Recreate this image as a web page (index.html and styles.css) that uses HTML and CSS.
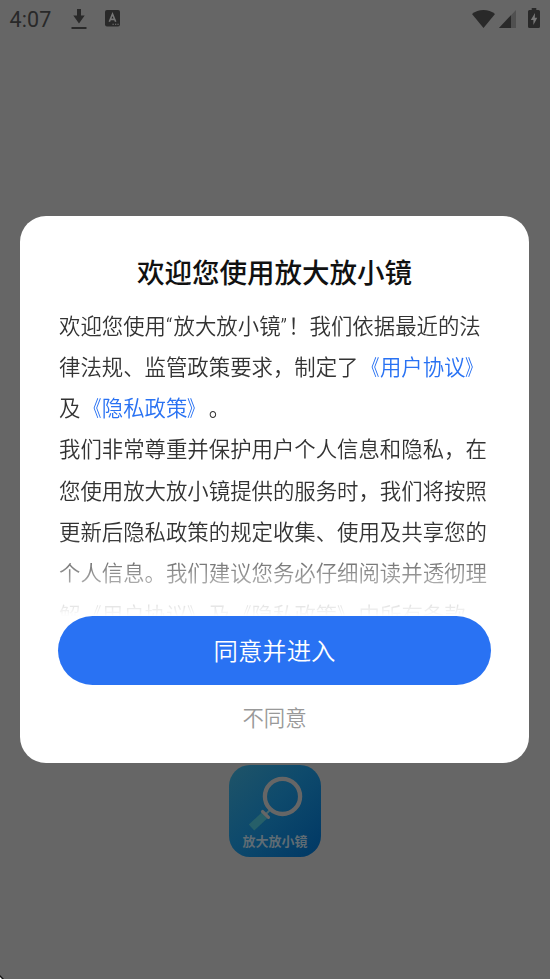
FILE: index.html
```html
<!DOCTYPE html>
<html lang="zh-CN">
<head>
<meta charset="utf-8">
<title>放大放小镜</title>
<link rel="stylesheet" href="styles.css">
</head>
<body>
<div class="screen">
  <header class="status">
    <span class="clock">4:07</span>
    <svg class="download" width="16" height="20" viewBox="0 0 16 20"><path d="M6 0h4v6.500h3.700L8 14.500 2.300 6.500H6zM.5 18h15v2H.5z"/></svg>
    <svg class="ime" width="15" height="17" viewBox="0 0 15 17"><rect width="15" height="16.500" rx="2"/><path class="ime-mark" d="M4.300 11.700 7.500 4l3.200 7.700M5.400 9.400h4.200"/><path class="ime-dots" d="M7.500 14.300h1.300M10 14.300h1.300M12.400 14.300h1.300"/></svg>
    <span class="spacer"></span>
    <svg class="wifi" width="23" height="18" viewBox="0 0 23 18"><path d="M0 4C6.300-1.300 16.700-1.300 23 4L11.500 18z"/></svg>
    <svg class="signal" width="17" height="18" viewBox="0 0 17 18"><path class="signal-empty" d="M17 0v18H0z"/><path d="M12 5.300V18H0z"/></svg>
    <svg class="battery" width="12" height="20" viewBox="0 0 12 20"><path d="M3.700 0h4.600v2H10.500Q12 2 12 3.500v15Q12 20 10.500 20h-9Q0 20 0 18.500v-15Q0 2 1.500 2h2.200z"/><path class="bolt" d="M7 5 2.800 12h2.600v5L9.300 9.800H6.800z"/></svg>
  </header>
  <div class="logo">
    <svg class="glass" width="92" height="92" viewBox="0 0 92 92">
      <path class="handle" d="M36.500 49.500 22.500 62.500"/>
      <path class="neck" d="m37 49 4.500-4.500"/>
      <path class="collar" d="m33.500 46.500 6 5.800"/>
      <circle class="lens" cx="53.500" cy="31.400" r="17.600"/>
    </svg>
    <span class="logo-name">放大放小镜</span>
  </div>
  <section class="dialog">
    <h1 class="title">欢迎您使用放大放小镜</h1>
    <div class="terms">
      <p>欢迎您使用<span class="quote">“</span>放大放小镜<span class="quote">”</span>！我们依据最近的法<br>律法规、监管政策要求，制定了<a><span class="open">《</span>用户协议<span class="close">》</span></a><br>及<a><span class="open">《</span>隐私政策<span class="close">》</span></a>。</p>
      <p>我们非常尊重并保护用户个人信息和隐私，在<br>您使用放大放小镜提供的服务时，我们将按照<br>更新后隐私政策的规定收集、使用及共享您的<br>个人信息。我们建议您务必仔细阅读并透彻理<br>解<span class="open">《</span>用户协议<span class="close">》</span>及<span class="open">《</span>隐私政策<span class="close">》</span>中所有条款。</p>
    </div>
    <button class="agree">同意并进入</button>
    <button class="decline">不同意</button>
  </section>
  <svg class="corner" width="4" height="4" viewBox="0 0 4 4"><path d="M0 0 4 4H0z"/><path class="corner-tip" d="M0 2 2 4H0z"/></svg>
</div>
</body>
</html>
```
FILE: styles.css
```css
* { box-sizing: border-box; }
body { margin: 0; }
.screen {
  position: relative;
  display: flex;
  flex-direction: column;
  align-items: center;
  justify-content: space-between;
  height: 979px;
  padding-bottom: 122px;
  overflow: hidden;
  background: #666;
  font-family: Roboto, "Noto Sans CJK SC", sans-serif;
  text-spacing-trim: space-all;
}
.status {
  display: flex;
  align-items: center;
  width: 100%;
  height: 37px;
  padding: 0 10px 0 9px;
  fill: #292929;
}
.clock { width: 62px; color: #292929; font-size: 21.500px; line-height: 37px; letter-spacing: .1px; padding: 1px 0 0 .5px; }
.ime { margin-left: 18px; }
.ime-mark, .ime-dots { fill: none; stroke: #777; stroke-width: 1.600; }
.ime-dots { stroke-width: 1.100; }
.spacer { flex: 1; }
.signal { margin-left: 4px; margin-top: 1px; }
.signal-empty { fill: #505050; }
.battery { margin-left: 12px; margin-top: -1px; }
.bolt { fill: #777; }
.logo {
  display: flex;
  align-items: flex-end;
  justify-content: center;
  position: relative;
  width: 92px;
  height: 92px;
  padding-bottom: 8px;
  border-radius: 21px;
  background: linear-gradient(135deg, #1f5468 0%, #0e4a6c 45%, #003865 100%);
}
.glass { position: absolute; inset: 0; fill: none; }
.lens { stroke: #666; stroke-width: 4.300; }
.handle { stroke: #265f69; stroke-width: 8; }
.collar { stroke: #666; stroke-width: 3.200; stroke-linecap: round; }
.neck { stroke: #4a666c; stroke-width: 2; }
.logo-name { color: #5f6c74; font-size: 13px; font-weight: 700; line-height: 14px; white-space: nowrap; }
.dialog {
  position: absolute;
  top: 216px;
  left: 20px;
  display: flex;
  flex-direction: column;
  align-items: center;
  width: 509px;
  height: 547px;
  padding: 37px 38px 0;
  border-radius: 26px;
  background: #fff;
}
.title { margin: 0; color: #111; font-size: 27.500px; font-weight: 500; line-height: 42px; white-space: nowrap; }
.terms {
  width: 100%;
  height: 321px;
  padding: 10.600px 0 0 1px;
  overflow: hidden;
  color: #333;
  font-size: 21.400px;
  font-weight: 350;
  line-height: 41.300px;
  white-space: nowrap;
  -webkit-mask-image: linear-gradient(#000 0 242px, transparent 321px);
  mask-image: linear-gradient(#000 0 242px, transparent 321px);
}
.terms p { margin: 0; }
.terms a { color: #2972f3; }
.quote { letter-spacing: 1.200px; }
.open, .close { display: inline-block; line-height: 1; transform: scaleX(.78); transform-origin: right center; }
.close { transform-origin: left center; }
button { padding: 0; border: 0; background: none; font-family: inherit; font-weight: 350; }
.agree {
  flex: none;
  width: 433px;
  height: 69px;
  padding-bottom: 2px;
  border-radius: 35px;
  background: #2972f3;
  color: #fff;
  font-size: 24.400px;
}
.decline { margin-top: 13px; height: 38px; padding-bottom: 2px; color: #999; font-size: 21.400px; }
.corner { position: absolute; left: 0; bottom: 0; fill: #111; }
.corner-tip { fill: #fff; }
```
